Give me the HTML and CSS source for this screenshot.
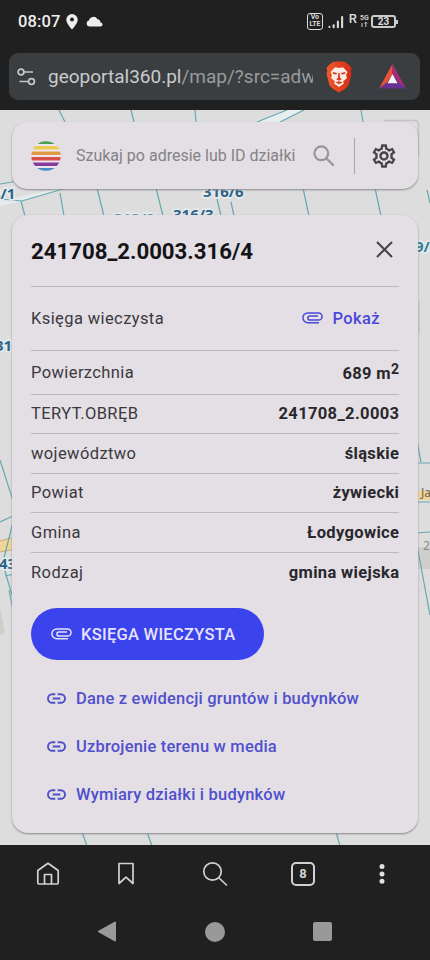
FILE: index.html
```html
<!DOCTYPE html>
<html lang="pl">
<head>
<meta charset="utf-8">
<meta name="viewport" content="width=device-width, initial-scale=1">
<title>geoportal360.pl</title>
<link rel="stylesheet" href="styles.css">
</head>
<body>
<div class="phone">
  <header class="browser">
    <div class="status">
      <span class="clock">08:07</span>
      <svg class="pin" width="12" height="16" viewBox="0 0 12 16"><path fill="#eee" fill-rule="evenodd" d="M6 0a5.7 5.7 0 0 0-5.7 5.7C.3 9.500 6 15.500 6 15.500s5.700-6 5.700-9.800A5.700 5.700 0 0 0 6 0zm0 3.600a2 2 0 1 1 0 4 2 2 0 0 1 0-4z"/></svg>
      <svg class="cloud" width="17" height="11" viewBox="0 0 17 11"><path fill="#eee" d="M3.300 10.500a3 3 0 0 1-.4-5.900A4.600 4.600 0 0 1 11.500 3.300a3.200 3.200 0 0 1 2.900 3.200 2 2 0 0 1 .2 4z"/></svg>
      <span class="volte"><b>Vo</b><b>LTE</b></span>
      <svg class="signal" width="17" height="14" viewBox="0 0 17 14" stroke="#ddd" stroke-width="2.200" stroke-linecap="round"><path d="M1.500 12.200v.2M6 10.500v2M10.500 6.500v6M15 1.800v10.700"/></svg>
      <span class="roam">R</span>
      <span class="net"><b>5G</b><svg width="8" height="6" viewBox="0 0 8 6" fill="none" stroke="#ccc"><path d="M2 1v4M5.800 0v5M4.500 1.500 5.800.2 7.100 1.500"/></svg></span>
      <span class="battery">23</span>
    </div>
    <div class="address">
      <svg class="tune" width="19" height="18" viewBox="0 0 19 18" fill="none" stroke="#c4c6c8" stroke-width="1.700"><circle cx="4" cy="4" r="2.900"/><path d="M7 4h9M2.500 13.500h9"/><circle cx="14.500" cy="13.500" r="2.900"/></svg>
      <span class="url">geoportal360.pl<i>/map/?src=adw</i></span>
      <svg class="brave" width="28" height="32" viewBox="0 0 28 32"><defs><linearGradient id="lion" x2="1"><stop stop-color="#ee5a29"/><stop offset="1" stop-color="#da2a16"/></linearGradient></defs><path fill="url(#lion)" d="m8 1 3-.5h6l3 .5 3.500 2.500 3 3.500-.8 3 .8 3-3 11.500L20 28l-6 3.500L8 28l-3.500-3.500-3-11.500.8-3-.8-3 3-3.500z"/><path fill="#faebe4" d="m14 7 4-.8 4.500 4.800-1.500 3 1 3-4 3.500 1 2-5 3.500-5-3.500 1-2L6 17l1-3-1.500-3L10 6.200z"/><path fill="#d53a1b" d="m7.500 11 4.700 1-1 1.500-3-.5zm13 0-4.700 1 1 1.500 3-.5zM13.300 12h1.400l.3 5 2 1-3 1.700-3-1.700 2-1zM10.500 21.200l3.500-1 3.500 1-3.500 2z"/></svg>
      <svg class="bat" width="27" height="25" viewBox="0 0 27 25"><path fill="#ee5138" d="M13.500 0 0 24.500l7-4.500 6.500-10z"/><path fill="#a72b7a" d="M13.500 0 27 24.500 20 20 13.500 10z"/><path fill="#66318f" d="M0 24.500h27L20 19H7z"/><path fill="#f7f0f8" d="m13.500 10 5 9.300h-10z"/></svg>
    </div>
  </header>

  <main class="page">
    <svg class="map" width="430" height="735" viewBox="0 110 430 735">
      <rect y="110" width="430" height="735" fill="#dcdddc"/>
      <path fill="#e8f0ef" d="m285 110-27 12h22l25-12z"/>
      <path fill="#e5eceb" d="m0 201 80-17-58 17-22 5z"/>
      <path fill="#cececd" d="M0 607l5 26-5 2zM418 547h12v22h-12zM418 302h2v32h-2z"/>
      <path fill="none" stroke="#c4c4c4" stroke-width="1.500" d="M384 120.500h31q3.500 0 3.500 4v32"/>
      <path fill="#f0d498" d="m0 541 15-4v12l-15 3zM415 491h15v9h-15z"/>
      <path stroke="#cba573" fill="none" d="m0 541 15-4M0 552l15-3"/>
      <g stroke="#65a9b2" stroke-width="1.200" fill="none">
        <path d="m59 110 6 12M131 110l3 12M195 110l1 12M287 110l-30 12M304 110l-24 12M361 110l2 12M0 184l18-3M0 199l22 2 58-17M21 201l4 15M60 193l4 23M97 188l7 28M156 188l7 28M217 199l4 17M231 202l3 14M303 188l6 28M375 188l6 28M427 190l3 13"/>
        <path d="m415 430 6 32M415 463h15M415 502h15M415 533l15-1M416 540l14 75M0 460l16 50M0 522l15-7M15 514 3 562M4 568l12 40M5 576l10-2M9 590l4 20M82 832l5 14M147 832l5 14M336 832l4 14"/>
      </g>
      <g class="plot">
        <text x="-8" y="199">3/1</text><text x="203" y="197">316/6</text><text x="173" y="220">316/3</text><text class="dim" x="114" y="224">313/2</text>
        <text x="-5" y="351">312</text><text x="-1" y="569">43</text><text class="teal" x="415" y="252">9/2</text>
      </g>
      <text class="road" x="421" y="497">Ja</text><text class="road num" x="423" y="550">2</text>
    </svg>

    <section class="search">
      <svg class="logo" width="30" height="30" viewBox="0 0 30 30"><defs><clipPath id="disc"><circle cx="15" cy="15" r="14.700"/></clipPath></defs><g clip-path="url(#disc)"><path fill="#eee6ee" d="M0 0h30v30H0z"/><path fill="#4d9c55" d="M0 0h30v3H0z"/><path fill="#eccb54" d="M0 5h30v3.500H0z"/><path fill="#df9a43" d="M0 10.500h30V14H0z"/><path fill="#d9504b" d="M0 16h30v3.500H0z"/><path fill="#87399c" d="M0 21.500h30V25H0z"/><path fill="#448bc8" d="M0 27h30v3H0z"/></g></svg>
      <span class="placeholder">Szukaj po adresie lub ID działki</span>
      <svg class="glass" width="22" height="22" viewBox="0 0 22 22" fill="none" stroke="#99969a" stroke-width="2.200"><circle cx="8.300" cy="8.300" r="6.900"/><path d="m13.300 13.300 7.300 7.300"/></svg>
      <span class="rule"></span>
      <svg class="gear" width="28" height="28" viewBox="0 0 24 24" fill="#47454a"><path d="M19.430 12.980c.04-.32.07-.64.07-.98s-.03-.66-.07-.98l2.110-1.650c.19-.15.24-.42.12-.64l-2-3.460c-.09-.16-.26-.25-.44-.25-.06 0-.12.010-.17.030l-2.490 1c-.52-.4-1.080-.73-1.690-.98l-.38-2.650C14.460 2.180 14.250 2 14 2h-4c-.25 0-.46.180-.49.420l-.38 2.650c-.61.250-1.170.590-1.690.980l-2.490-1c-.06-.02-.12-.03-.18-.03-.17 0-.34.090-.43.250l-2 3.460c-.13.220-.07.490.12.640l2.110 1.650c-.04.320-.07.650-.07.980s.03.660.07.980l-2.110 1.650c-.19.150-.24.420-.12.640l2 3.460c.09.160.26.250.44.250.06 0 .12-.01.17-.03l2.490-1c.52.400 1.080.730 1.690.980l.38 2.650c.03.240.24.420.49.420h4c.25 0 .46-.18.490-.42l.38-2.650c.61-.25 1.170-.59 1.690-.98l2.490 1c.06.020.12.030.18.030.17 0 .34-.09.430-.25l2-3.460c.12-.22.07-.49-.12-.64l-2.110-1.650zm-1.980-1.710c.04.310.05.520.05.730 0 .210-.02.430-.05.730l-.14 1.130.89.700 1.080.840-.7 1.210-1.270-.51-1.040-.42-.9.680c-.43.320-.84.560-1.250.730l-1.060.43-.16 1.130-.2 1.350h-1.400l-.19-1.350-.16-1.130-1.060-.43c-.43-.18-.83-.41-1.230-.71l-.91-.7-1.060.43-1.270.51-.7-1.210 1.080-.84.890-.7-.14-1.130c-.03-.31-.05-.54-.05-.74s.02-.43.050-.73l.14-1.130-.89-.7-1.080-.84.700-1.210 1.270.51 1.040.42.900-.68c.43-.32.840-.56 1.250-.73l1.060-.43.160-1.130.2-1.350h1.390l.19 1.350.16 1.130 1.060.43c.43.180.83.410 1.230.71l.91.700 1.060-.43 1.270-.51.700 1.210-1.070.85-.89.700.14 1.130zM12 8c-2.210 0-4 1.790-4 4s1.790 4 4 4 4-1.790 4-4-1.790-4-4-4zm0 6c-1.100 0-2-.9-2-2s.9-2 2-2 2 .9 2 2-.9 2-2 2z"/></svg>
    </section>

    <section class="panel">
      <div class="head"><h1>241708_2.0003.316/4</h1><svg width="17" height="17" viewBox="0 0 17 17" stroke="#464449" stroke-width="2.100"><path d="m1 1 15 15M16 1 1 16"/></svg></div>
      <div class="row register"><span>Księga wieczysta</span>
        <a class="show"><svg class="clip" width="21" height="12" viewBox="0 0 21 12"><use href="#clip"/></svg>Pokaż</a></div>
      <dl>
        <div class="row area"><dt>Powierzchnia</dt><dd>689 m<sup>2</sup></dd></div>
        <div class="row"><dt>TERYT.OBRĘB</dt><dd>241708_2.0003</dd></div>
        <div class="row"><dt>województwo</dt><dd>śląskie</dd></div>
        <div class="row"><dt>Powiat</dt><dd>żywiecki</dd></div>
        <div class="row"><dt>Gmina</dt><dd>Łodygowice</dd></div>
        <div class="row"><dt>Rodzaj</dt><dd>gmina wiejska</dd></div>
      </dl>
      <a class="button"><svg class="clip" width="21" height="12" viewBox="0 0 21 12"><g id="clip" fill="none" stroke="currentColor" stroke-width="1.500"><path d="M17 10.700H5.800A4.900 4.900 0 0 1 5.800.9h10.700a3.600 3.600 0 0 1 0 7.200H8a2.100 2.100 0 0 1 0-4.200h8"/></g></svg><span>KSIĘGA WIECZYSTA</span></a>
      <nav class="links">
        <a><svg width="19" height="11" viewBox="0 0 19 11"><g id="chain" fill="none" stroke="currentColor" stroke-width="1.900"><path d="M8.300 1.200H5.300a4.300 4.300 0 0 0 0 8.600h3M10.700 1.200h3a4.300 4.300 0 0 1 0 8.600h-3M5.700 5.500h7.600"/></g></svg><span>Dane z ewidencji gruntów i budynków</span></a>
        <a><svg width="19" height="11" viewBox="0 0 19 11"><use href="#chain"/></svg><span>Uzbrojenie terenu w media</span></a>
        <a><svg width="19" height="11" viewBox="0 0 19 11"><use href="#chain"/></svg><span>Wymiary działki i budynków</span></a>
      </nav>
    </section>
  </main>

  <footer>
    <div class="tools">
      <svg width="24" height="24" viewBox="0 0 24 24" fill="none" stroke="#d2d2d2" stroke-width="1.700" stroke-linejoin="round"><path d="M1.800 8.500 12 1.300l10.200 7.200v12.300a1.200 1.200 0 0 1-1.200 1.200H3a1.200 1.200 0 0 1-1.200-1.200zM8.500 22v-9.500h7V22"/></svg>
      <svg width="18" height="24" viewBox="0 0 18 24" fill="none" stroke="#d2d2d2" stroke-width="1.700" stroke-linejoin="round"><path d="M2 1.500h14v20l-7-6.300-7 6.300z"/></svg>
      <svg width="26" height="26" viewBox="0 0 26 26" fill="none" stroke="#d2d2d2" stroke-width="1.700"><circle cx="10.500" cy="10.500" r="8.700"/><path d="m17 17 8 7.500"/></svg>
      <span class="tabs">8</span>
      <svg width="6" height="20" viewBox="0 0 6 20" fill="#e0e0e0"><circle cx="3" cy="2.600" r="2.500"/><circle cx="3" cy="9.900" r="2.500"/><circle cx="3" cy="17.200" r="2.500"/></svg>
    </div>
    <div class="system">
      <svg width="20" height="21" viewBox="0 0 20 21"><path fill="#999" stroke="#999" stroke-width="2" stroke-linejoin="round" d="M18 1.500v18L2 10.500z"/></svg>
      <span class="circle"></span><span class="square"></span>
    </div>
  </footer>
</div>
</body>
</html>
```
FILE: styles.css
```css
* { box-sizing: border-box; }
body { margin: 0; font-family: Roboto, "Liberation Sans", sans-serif; background: #202020; }
svg { display: block; flex: none; }
.phone { width: 430px; height: 960px; display: flex; flex-direction: column; overflow: hidden; }
.browser { height: 110px; background: #202020; padding: 0 10px 0 9px; flex: none; }

.status { height: 53px; padding: 12px 24px 10px 9px; display: flex; align-items: flex-start; color: #eee; }
.clock { font-size: 16.500px; line-height: 20px; letter-spacing: .1px; font-weight: 500; width: 48px; }
.pin { margin-top: 2px; }
.cloud { margin: 4px 0 0 8px; }
.volte { margin: 1px 5px 0 auto; width: 16px; height: 17px; border: 1.500px solid #ddd; border-radius: 3px; display: flex; flex-direction: column; align-items: center; font-size: 7px; line-height: 7px; letter-spacing: -.2px; color: #ddd; }
.signal { margin-top: 3px; width: 16px; }
.roam { font-size: 13px; line-height: 14px; font-weight: 500; margin: 0 3px 0 5px; color: #ddd; }
.net { width: 9px; font-size: 7px; line-height: 7px; margin: 3px 2px 0 0; color: #ccc; }
.battery { position: relative; margin-top: 3px; width: 25px; height: 13px; border: 2px solid #ccc; border-radius: 3px; font-size: 10px; line-height: 9.500px; font-weight: 700; text-align: center; color: #ddd; }
.battery::after { content: ""; position: absolute; right: -4px; top: 2.500px; width: 2px; height: 4px; background: #ccc; }

.address { height: 47px; border-radius: 9px; background: #3b3e40; display: flex; align-items: center; padding: 0 14px 0 8px; }
.url { margin: 0 12px 0 12px; width: 266px; font-size: 19px; line-height: 28px; color: #c9cbcc; white-space: nowrap; overflow: hidden; }
.url i { font-style: normal; color: #989b9c; }
.brave { margin-right: 26px; }

.page { position: relative; height: 735px; flex: none; padding: 12px; display: flex; flex-direction: column; gap: 26px; }
.map { position: absolute; left: 0; top: 0; }
.plot text { font: 700 15px "Noto Sans", sans-serif; fill: #2f6284; stroke: #e6edf0; stroke-width: 3px; paint-order: stroke; }
.plot .dim { fill: #6b8c9f; }
.plot .teal { fill: #32808f; }
.road { font: 12px "Noto Sans", sans-serif; fill: #6f6652; }
.road.num { fill: #888; }

.search, .panel { position: relative; background: #e3dfe4; box-shadow: 0 1px 2px #8a888a; }
.search { height: 67px; border-radius: 15px; display: flex; align-items: center; padding: 0 20px 0 19px; flex: none; }
.placeholder { font-size: 16px; width: 239px; margin-left: 15px; color: #858287; white-space: nowrap; }
.rule { width: 1px; height: 36px; background: #a9a6aa; margin: 0 15px 0 19px; }

.panel { height: 618px; border-radius: 16px; padding: 0 19px; color: #3b393e; flex: none; }
.head { height: 72px; display: flex; align-items: center; justify-content: space-between; padding: 0 6px 2px 0; border-bottom: 1px solid #bcb9be; }
h1 { margin: 0; padding-top: 2px; font-size: 22.200px; line-height: 30px; color: #141317; font-weight: 700; }
.row { height: 39.600px; display: flex; align-items: center; justify-content: space-between; border-bottom: 1px solid #bcb9be; font-size: 16.500px; letter-spacing: .4px; }
.row:last-child { border: 0; }
.register { height: 63.500px; padding-right: 19px; }
.area { height: 44px; }
.show { display: flex; align-items: center; gap: 9px; font-weight: 500; color: #4a48dc; }
dl, dd { margin: 0; }
dd { font-weight: 700; letter-spacing: .35px; margin-right: -.35px; color: #29272c; }
.area dd { padding-top: 3px; }
sup { font-size: 14px; line-height: 0; vertical-align: 5px; }
.button { width: 233px; height: 52.500px; margin-top: 15.500px; padding-left: 20px; border-radius: 27px; background: #3b43ed; color: #e6e4fc; display: flex; align-items: center; gap: 9px; font-size: 16.500px; letter-spacing: .27px; font-weight: 500; white-space: nowrap; }
.links { margin: 14px 0 0 16px; display: flex; flex-direction: column; }
.links a { height: 48px; display: flex; align-items: center; gap: 10px; color: #504fce; font-size: 16.500px; letter-spacing: .2px; font-weight: 500; white-space: nowrap; }

footer { height: 115px; background: #202020; flex: none; }
.tools { height: 58px; padding-left: 36px; display: flex; align-items: center; }
.tools > :nth-child(2) { margin-left: 57px; }
.tools > :nth-child(3) { margin-left: 67px; }
.tools > :nth-child(4) { margin-left: 63px; }
.tools > :nth-child(5) { margin-left: 64px; }
.tabs { width: 24px; height: 24px; border: 2px solid #d2d2d2; border-radius: 5px; font-size: 13px; line-height: 20px; font-weight: 700; text-align: center; color: #d2d2d2; }
.system { height: 57px; padding: 0 98px 0 97px; display: flex; align-items: center; justify-content: space-between; }
.circle { width: 20px; height: 20px; border-radius: 50%; background: #999; }
.square { width: 19px; height: 19px; border-radius: 2px; background: #999; }
```
